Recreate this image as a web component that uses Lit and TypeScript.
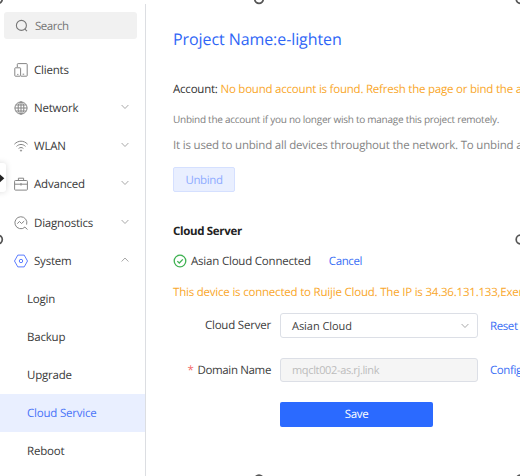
import { LitElement, html, css, svg, TemplateResult } from "lit";
import { customElement } from "lit/decorators.js";
import { classMap } from "lit/directives/class-map.js";

const icons: Record<string, TemplateResult> = {
  search: svg`<circle cx="6.4" cy="6.4" r="5"/><path d="M9.9 10.2 12 12.2"/>`,
  clients: svg`<path d="M3.3 4.2V1.4a.8.8 0 0 1 .8-.8h8.3a.8.8 0 0 1 .8.8v11.2a.6.6 0 0 1-.6.6H7"/><rect x=".8" y="4.8" width="5.8" height="8.4" rx=".6"/><path d="M3.2 11.4h1.2M8.6 11.2h1.6"/>`,
  network: svg`<circle cx="7" cy="7" r="6.1"/><ellipse cx="7" cy="7" rx="2.9" ry="6.1"/><path d="M7 .9v12.2M.9 7h12.2M1.8 4h10.4M1.8 10h10.4"/>`,
  wlan: svg`<path d="M.4 5.2C4.2 1.2 9.8 1.2 13.6 5.2M2.5 7.4C5.1 4.8 8.9 4.8 11.5 7.4M4.6 9.5c1.4-1.3 3.4-1.3 4.8 0"/><circle cx="7" cy="11.6" r=".6"/>`,
  advanced: svg`<rect x=".6" y="3.5" width="12.8" height="9.6" rx=".8"/><path d="M4.4 3.4V1.2h5.2v2.2M.7 7.2h12.6M7 6v2.6"/>`,
  diagnostics: svg`<path d="M10.8 11.3A6 6 0 1 1 12.6 8.6M10.7 10.9l2.8 2.6M3.3 7.6l2.2-2.1 2 2 2.7-2.4"/>`,
  system: svg`<path d="M3.8 1.1h6.4L13.5 7l-3.3 5.9H3.8L.5 7z"/><circle cx="7" cy="7" r="1.7"/>`,
  down: svg`<path d="m3.6 5 3.4 3.5L10.4 5"/>`,
  up: svg`<path d="M3.6 8.5 7 5l3.4 3.5"/>`,
  check: svg`<circle cx="7" cy="7" r="5.8"/><path d="m4.3 7.1 2 1.9 3.5-3.6"/>`,
};

const icon = (name: string, cls = "") =>
  html`<svg class="icon ${cls}" viewBox="0 0 14 14">${icons[name]}</svg>`;

interface Item { label: string; icon?: string; arrow?: string; active?: boolean }

const items: Item[] = [
  { label: "Clients", icon: "clients" },
  { label: "Network", icon: "network", arrow: "down" },
  { label: "WLAN", icon: "wlan", arrow: "down" },
  { label: "Advanced", icon: "advanced", arrow: "down" },
  { label: "Diagnostics", icon: "diagnostics", arrow: "down" },
  { label: "System", icon: "system", arrow: "up" },
  { label: "Login" },
  { label: "Backup" },
  { label: "Upgrade" },
  { label: "Cloud Service", active: true },
  { label: "Reboot" },
];

@customElement("side-nav")
class SideNav extends LitElement {
  static styles = css`
    :host { display: block; box-sizing: border-box; width: 146px; height: 472px; margin-top: 4px; border-right: 1px solid #dcdee2; overflow: hidden; }
    .icon { width: 14px; height: 14px; flex: none; fill: none; stroke: #858585; stroke-width: 1; display: block; }
    .search { display: flex; align-items: center; gap: 6px; box-sizing: border-box; width: 133px; height: 27px; margin: 8px 0 12px 4px; padding-left: 11px; background: #f1f1f1; border-radius: 3px; color: #757575; letter-spacing: -0.45px; }
    .search span { padding-top: 2px; }
    .search .icon { stroke: #777; stroke-width: 1.1; }
    .row { display: flex; align-items: center; height: 38.15px; padding: 0 13px 0 14px; color: #3a3a3a; }
    .label { flex: 1; margin-left: 6px; padding-top: 1px; white-space: nowrap; }
    .sub { padding-left: 27px; }
    .sub .label { margin-left: 0; }
    .active { background: #e9efff; color: #4a74f8; }
    .icon.blue { stroke: #5b7cff; }
    .icon.arrow { stroke: #a9a9a9; position: relative; top: -1px; }
  `;
  render() {
    return html`
      <div class="search">${icon("search")}<span>Search</span></div>
      ${items.map(i => html`
        <div class=${classMap({ row: true, sub: !i.icon, active: !!i.active })}>
          ${i.icon ? icon(i.icon, i.icon === "system" ? "blue" : "") : ""}
          <span class="label">${i.label}</span>
          ${i.arrow ? icon(i.arrow, "arrow") : ""}
        </div>`)}
    `;
  }
}

@customElement("cloud-panel")
class CloudPanel extends LitElement {
  static styles = css`
    :host { display: block; flex: 1; min-width: 0; box-sizing: border-box; padding: 27px 0 0 27px; overflow: hidden; white-space: nowrap; color: #404040; }
    .icon { width: 14px; height: 14px; flex: none; fill: none; stroke: #aaa; stroke-width: 1; display: block; }
    .title { font-size: 16px; line-height: 24px; letter-spacing: -0.08px; color: #2f66f6; }
    .account { margin-top: 30px; line-height: 18px; letter-spacing: -0.22px; color: #333; }
    .warn { color: #f9a72b; }
    .note { margin-top: 12px; font-size: 10px; line-height: 16px; letter-spacing: -0.26px; color: #808080; }
    .desc { margin-top: 10px; line-height: 18px; letter-spacing: -0.19px; color: #858585; }
    .unbind { display: flex; align-items: center; justify-content: center; box-sizing: border-box; width: 62px; height: 25px; margin-top: 12px; padding-top: 2px; border: 1px solid #d5e0ff; border-radius: 2px; background: #e9efff; color: #8facff; letter-spacing: -0.4px; }
    .heading { margin-top: 31px; line-height: 18px; font-weight: 700; letter-spacing: -0.32px; color: #222; }
    .status { display: flex; align-items: center; margin-top: 11px; line-height: 18px; }
    .status span { padding-top: 1px; margin-bottom: -1px; }
    .ok { stroke: #40b253; stroke-width: 1.3; margin-right: 4px; }
    .link { color: #3b6ff5; letter-spacing: -0.4px; }
    .status .link { margin-left: 18px; }
    .info { margin-top: 14px; line-height: 18px; letter-spacing: -0.205px; }
    .form { display: grid; grid-template-columns: 98px 198px auto; grid-template-rows: 25px 24px 25px; column-gap: 9px; row-gap: 20px; margin-top: 11px; align-items: center; }
    .form .link { margin-left: 3px; padding-top: 1px; }
    .name { text-align: right; }
    .tight { letter-spacing: -0.35px; }
    .req { color: #f56c6c; margin-right: 4px; }
    .field { display: flex; align-items: center; justify-content: space-between; box-sizing: border-box; height: 100%; padding: 1px 5px 0 11px; border: 1px solid #dcdfe6; border-radius: 3px; font-size: 11px; letter-spacing: -0.05px; }
    .disabled { background: #f5f5f5; color: #bcbcbc; letter-spacing: -0.35px; }
    .save { grid-column: 2; display: flex; align-items: center; justify-content: center; width: 153px; height: 25px; border-radius: 2px; background: #2b6aff; color: #fff; letter-spacing: -0.3px; }
  `;
  render() {
    return html`
      <div class="title">Project Name:e-lighten</div>
      <div class="account">Account: <span class="warn">No bound account is found. Refresh the page or bind the a</span></div>
      <div class="note">Unbind the account if you no longer wish to manage this project remotely.</div>
      <div class="desc">It is used to unbind all devices throughout the network. To unbind a</div>
      <div class="unbind">Unbind</div>
      <div class="heading">Cloud Server</div>
      <div class="status">${icon("check", "ok")}<span>Asian Cloud Connected</span><span class="link">Cancel</span></div>
      <div class="info warn">This device is connected to Ruijie Cloud. The IP is 34.36.131.133,Exer</div>
      <div class="form">
        <span class="name">Cloud Server</span>
        <div class="field"><span>Asian Cloud</span>${icon("down")}</div>
        <span class="link">Reset</span>
        <span class="name tight"><span class="req">*</span>Domain Name</span>
        <div class="field disabled">mqclt002-as.rj.link</div>
        <span class="link">Config</span>
        <div class="save">Save</div>
      </div>
    `;
  }
}

@customElement("app-root")
class AppRoot extends LitElement {
  static styles = css`
    :host { display: flex; position: relative; width: 520px; height: 476px; overflow: hidden; background: #fff; font: 11.5px "Open Sans", "Noto Sans", sans-serif; letter-spacing: -0.2px; text-rendering: geometricPrecision; }
    .tab { position: absolute; left: -8px; top: 163px; width: 14px; height: 29px; border-radius: 3px; background: #fff; box-shadow: 0 0 6px rgba(0,0,0,.15); }
    .overlay { position: absolute; inset: 0; width: 520px; height: 476px; fill: none; stroke: #555; stroke-width: 1.7; }
    .tip { fill: #222; stroke: none; }
  `;
  render() {
    const handles = [[-2, -1], [259, -1], [520.5, -1], [-2, 239.5], [520.5, 239.5], [259, 479.5], [520.5, 479.5]];
    return html`
      <side-nav></side-nav>
      <cloud-panel></cloud-panel>
      <div class="tab"></div>
      <svg class="overlay" viewBox="0 0 520 476">
        <path class="tip" d="M0 174.5 4.3 178.3 0 182.2z"/>
        ${handles.map(([x, y]) => svg`<circle cx=${x} cy=${y} r="4.3"/>`)}
      </svg>
    `;
  }
}
